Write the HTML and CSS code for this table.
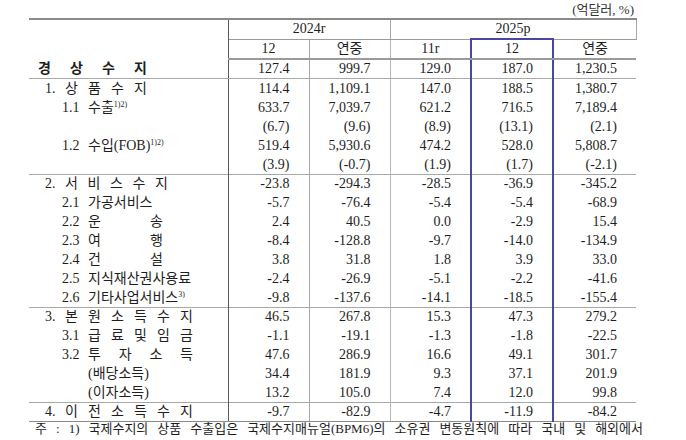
FILE: index.html
```html
<!DOCTYPE html>
<html lang="ko">
<head>
    <meta charset="UTF-8">
    <title>경상수지</title>
    <link rel="stylesheet" href="styles.css">
</head>
<body>
    <div class="unit">(억달러, %)</div>
    <table class="bop">
        <colgroup>
            <col class="c-label">
            <col class="c-num">
            <col class="c-num">
            <col class="c-num">
            <col class="c-hl">
            <col class="c-last">
        </colgroup>
        <thead>
            <tr class="h1">
                <th class="label" rowspan="2"></th>
                <th colspan="2" class="vl">2024r</th>
                <th colspan="3" class="vl">2025p</th>
            </tr>
            <tr class="h2">
                <th class="vl">12</th>
                <th class="vl2">연중</th>
                <th class="vl">11r</th>
                <th class="hl hl-top">12</th>
                <th>연중</th>
            </tr>
        </thead>
        <tbody>
            <tr class="total">
                <td class="label lv0"><span class="sp w109">경 상 수 지</span></td>
                <td class="vl">127.4</td><td class="vl2">999.7</td><td class="vl">129.0</td><td class="hl">187.0</td><td>1,230.5</td>
            </tr>
            <tr>
                <td class="label lv1"><span class="no1">1.</span><span class="sp w82">상 품 수 지</span></td>
                <td class="vl">114.4</td><td class="vl2">1,109.1</td><td class="vl">147.0</td><td class="hl">188.5</td><td>1,380.7</td>
            </tr>
            <tr>
                <td class="label lv2"><span class="no2">1.1</span>수출<sup>1)2)</sup></td>
                <td class="vl">633.7</td><td class="vl2">7,039.7</td><td class="vl">621.2</td><td class="hl">716.5</td><td>7,189.4</td>
            </tr>
            <tr>
                <td class="label"></td>
                <td class="vl">(6.7)</td><td class="vl2">(9.6)</td><td class="vl">(8.9)</td><td class="hl">(13.1)</td><td>(2.1)</td>
            </tr>
            <tr>
                <td class="label lv2"><span class="no2">1.2</span>수입(FOB)<sup>1)2)</sup></td>
                <td class="vl">519.4</td><td class="vl2">5,930.6</td><td class="vl">474.2</td><td class="hl">528.0</td><td>5,808.7</td>
            </tr>
            <tr>
                <td class="label"></td>
                <td class="vl">(3.9)</td><td class="vl2">(-0.7)</td><td class="vl">(1.9)</td><td class="hl">(1.7)</td><td>(-2.1)</td>
            </tr>
            <tr class="sep">
                <td class="label lv1"><span class="no1">2.</span><span class="sp w103">서 비 스 수 지</span></td>
                <td class="vl">-23.8</td><td class="vl2">-294.3</td><td class="vl">-28.5</td><td class="hl">-36.9</td><td>-345.2</td>
            </tr>
            <tr>
                <td class="label lv2"><span class="no2">2.1</span>가공서비스</td>
                <td class="vl">-5.7</td><td class="vl2">-76.4</td><td class="vl">-5.4</td><td class="hl">-5.4</td><td>-68.9</td>
            </tr>
            <tr>
                <td class="label lv2"><span class="no2">2.2</span><span class="sp w75">운 송</span></td>
                <td class="vl">2.4</td><td class="vl2">40.5</td><td class="vl">0.0</td><td class="hl">-2.9</td><td>15.4</td>
            </tr>
            <tr>
                <td class="label lv2"><span class="no2">2.3</span><span class="sp w75">여 행</span></td>
                <td class="vl">-8.4</td><td class="vl2">-128.8</td><td class="vl">-9.7</td><td class="hl">-14.0</td><td>-134.9</td>
            </tr>
            <tr>
                <td class="label lv2"><span class="no2">2.4</span><span class="sp w75">건 설</span></td>
                <td class="vl">3.8</td><td class="vl2">31.8</td><td class="vl">1.8</td><td class="hl">3.9</td><td>33.0</td>
            </tr>
            <tr>
                <td class="label lv2"><span class="no2">2.5</span>지식재산권사용료</td>
                <td class="vl">-2.4</td><td class="vl2">-26.9</td><td class="vl">-5.1</td><td class="hl">-2.2</td><td>-41.6</td>
            </tr>
            <tr>
                <td class="label lv2"><span class="no2">2.6</span>기타사업서비스<sup>3)</sup></td>
                <td class="vl">-9.8</td><td class="vl2">-137.6</td><td class="vl">-14.1</td><td class="hl">-18.5</td><td>-155.4</td>
            </tr>
            <tr class="sep">
                <td class="label lv1"><span class="no1">3.</span><span class="sp w128">본 원 소 득 수 지</span></td>
                <td class="vl">46.5</td><td class="vl2">267.8</td><td class="vl">15.3</td><td class="hl">47.3</td><td>279.2</td>
            </tr>
            <tr>
                <td class="label lv2"><span class="no2">3.1</span><span class="sp w105">급 료 및 임 금</span></td>
                <td class="vl">-1.1</td><td class="vl2">-19.1</td><td class="vl">-1.3</td><td class="hl">-1.8</td><td>-22.5</td>
            </tr>
            <tr>
                <td class="label lv2"><span class="no2">3.2</span><span class="sp w105">투 자 소 득</span></td>
                <td class="vl">47.6</td><td class="vl2">286.9</td><td class="vl">16.6</td><td class="hl">49.1</td><td>301.7</td>
            </tr>
            <tr>
                <td class="label lv3">(배당소득)</td>
                <td class="vl">34.4</td><td class="vl2">181.9</td><td class="vl">9.3</td><td class="hl">37.1</td><td>201.9</td>
            </tr>
            <tr>
                <td class="label lv3">(이자소득)</td>
                <td class="vl">13.2</td><td class="vl2">105.0</td><td class="vl">7.4</td><td class="hl">12.0</td><td>99.8</td>
            </tr>
            <tr class="sep last">
                <td class="label lv1"><span class="no1">4.</span><span class="sp w128">이 전 소 득 수 지</span></td>
                <td class="vl">-9.7</td><td class="vl2">-82.9</td><td class="vl">-4.7</td><td class="hl hl-bottom">-11.9</td><td>-84.2</td>
            </tr>
        </tbody>
    </table>
    <p class="note">주 : 1) 국제수지의 상품 수출입은 국제수지매뉴얼(BPM6)의 소유권 변동원칙에 따라 국내 및 해외에서</p>
</body>
</html>
```

FILE: styles.css
```css
body {
    margin: 0;
    padding: 0;
    background: #fff;
    color: #1e1e1e;
    font-family: 'Liberation Serif', 'Noto Sans CJK KR', serif;
    font-size: 14px;
    overflow: hidden;
}
.unit {
    width: 605px;
    margin-left: 29px;
    height: 18px;
    line-height: 20px;
    font-size: 13px;
    text-align: right;
    color: #333;
}
.bop {
    margin-left: 29px;
    width: 607px;
    table-layout: fixed;
    border-collapse: collapse;
    border-top: 2px solid #8a8a8a;
}
.c-label { width: 199px; }
.c-num { width: 81px; }
.c-hl { width: 82px; }
.c-last { width: 83px; }
.bop th,
.bop td {
    height: 19px;
    padding: 0;
    line-height: 18px;
    white-space: nowrap;
}
.bop th {
    font-weight: normal;
    text-align: center;
}
.bop td {
    text-align: right;
    padding-right: 19px;
}
.bop td.label,
.bop th.label {
    text-align: left;
    padding-right: 0;
    border-right: 1px solid #5a5a5a;
}
.bop .h1 th { height: 17px; }
.bop .h2 th { height: 17px; }
.h1 th.vl { border-bottom: 1px solid #9a9a9a; }
.h2 th { border-bottom: 2px solid #9a9a9a; }
.vl { border-right: 1px solid #a8a8a8; }
.vl2 { border-right: 1px solid #b8b8b8; }
.hl {
    border-left: 2px solid #4a47a3;
    border-right: 2px solid #4a47a3;
}
.bop th.hl-top { border-top: 2px solid #4a47a3; }
.bop td.hl-bottom { border-bottom: 2px solid #4a47a3; }
.bop .total td {
    height: 18px;
    border-bottom: 1px solid #a8a8a8;
}
.total .label { font-weight: bold; }
.bop .sep td {
    height: 18px;
    border-top: 1px solid #a8a8a8;
}
.bop .last td {
    height: 17px;
    border-bottom: 1px solid #8a8a8a;
}
.bop td.lv0 { padding-left: 9px; }
.bop td.lv1 { padding-left: 16px; }
.bop td.lv2 { padding-left: 33px; }
.bop td.lv3 { padding-left: 59px; }
.no1 {
    display: inline-block;
    width: 20px;
}
.no2 {
    display: inline-block;
    width: 26px;
}
.sp {
    display: inline-block;
    text-align: justify;
    text-align-last: justify;
    vertical-align: top;
}
.w75 { width: 75px; }
.w82 { width: 82px; }
.w103 { width: 103px; }
.w105 { width: 105px; }
.w109 { width: 109px; }
.w128 { width: 128px; }
sup {
    font-size: 8px;
    line-height: 0;
    vertical-align: 5px;
}
.note {
    margin: 0 0 0 35px;
    width: 608px;
    font-size: 13px;
    line-height: 14px;
    text-align: justify;
    text-align-last: justify;
}
```
